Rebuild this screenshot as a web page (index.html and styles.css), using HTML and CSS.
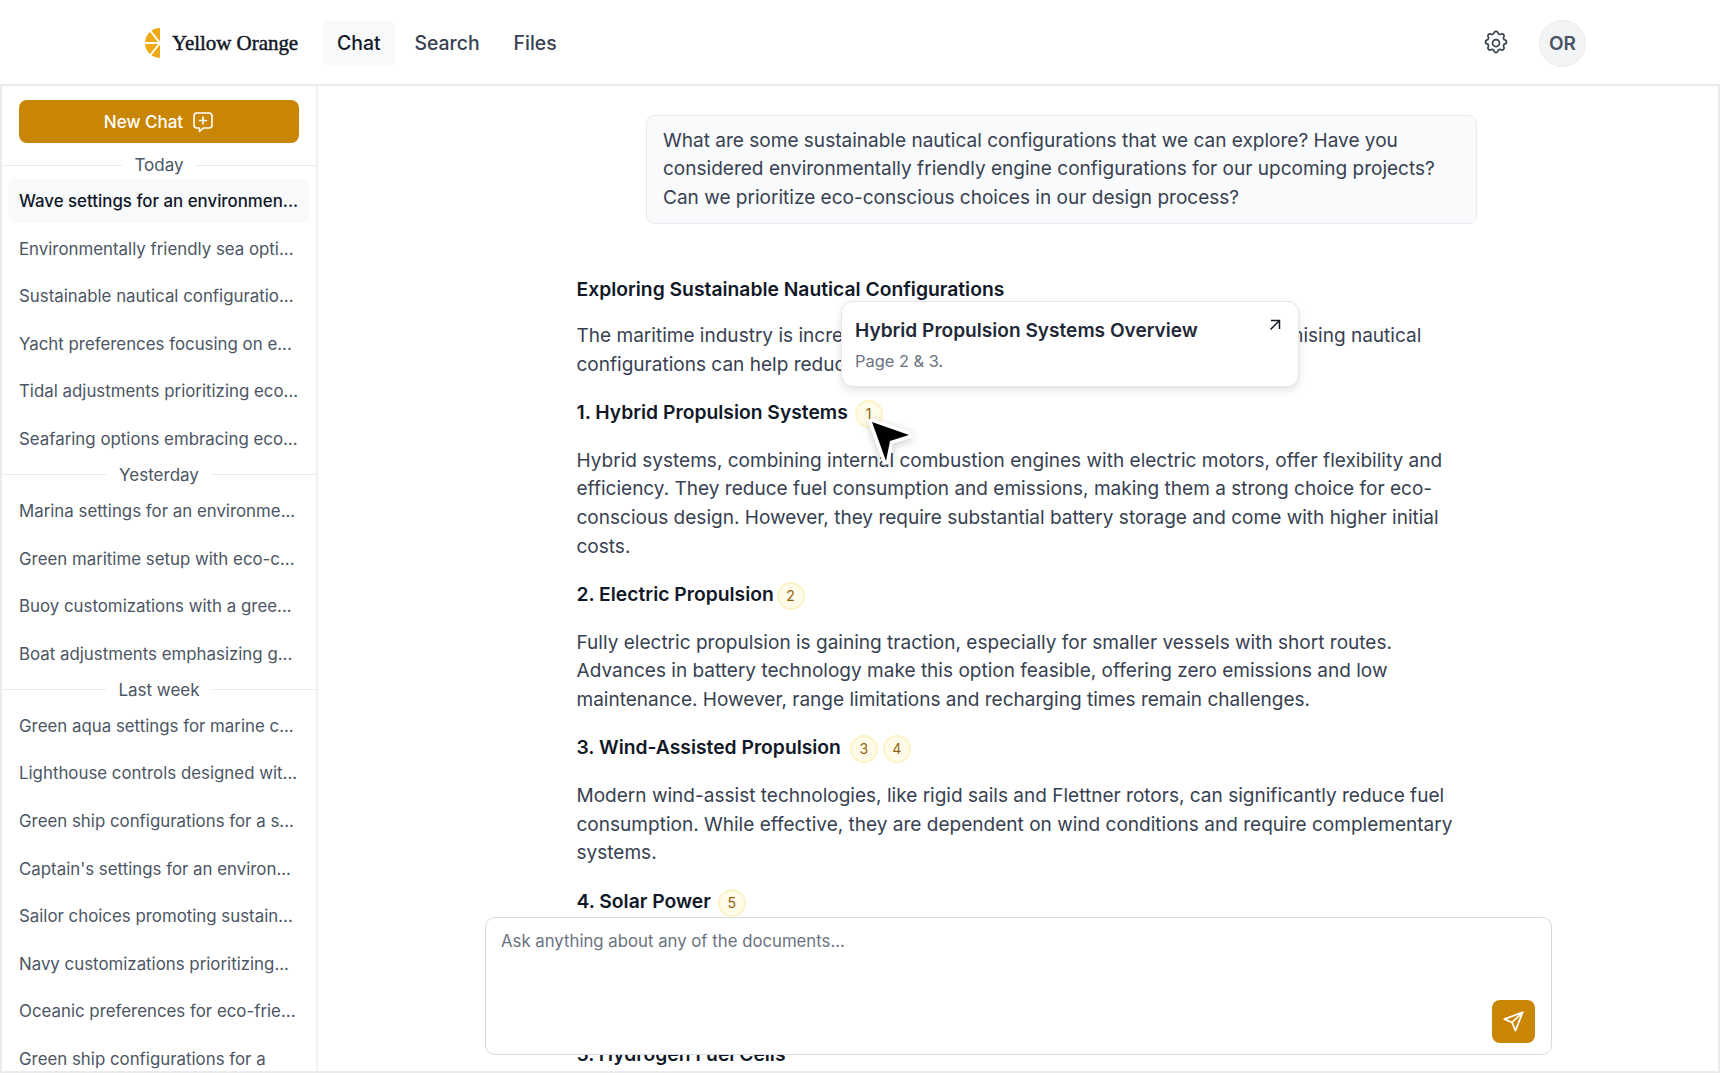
FILE: index.html
```html
<!DOCTYPE html>
<html lang="en">
<head>
    <meta charset="UTF-8">
    <title>Yellow Orange Chat</title>
    <link rel="stylesheet" href="styles.css">
</head>
<body>
    <header class="topbar">
        <div class="brand">
            <svg class="brand-icon" width="16" height="30" viewBox="0 0 16 30">
                <path d="M15 0A15 15 0 0 0 15 30Z" fill="#eeaa14"/>
                <path d="M15 15L5 2.5M15 15L0 15M15 15L5 27.5" stroke="#fff" stroke-width="2" fill="none"/>
            </svg>
            <span class="brand-name">Yellow Orange</span>
        </div>
        <nav class="nav">
            <a class="nav-link active">Chat</a>
            <a class="nav-link">Search</a>
            <a class="nav-link">Files</a>
        </nav>
        <div class="topbar-right">
            <svg class="gear" width="28" height="28" viewBox="0 0 24 24" fill="none" stroke="#374151" stroke-width="1.5" stroke-linecap="round" stroke-linejoin="round">
                <path d="M10.3 3.3c.4-1.8 3-1.8 3.4 0a1.7 1.7 0 0 0 2.6 1.1c1.5-.9 3.3.8 2.4 2.4a1.7 1.7 0 0 0 1 2.6c1.8.4 1.8 3 0 3.4a1.7 1.7 0 0 0-1 2.6c.9 1.5-.9 3.3-2.4 2.4a1.7 1.7 0 0 0-2.6 1c-.4 1.8-3 1.8-3.4 0a1.7 1.7 0 0 0-2.6-1c-1.5.9-3.3-.9-2.4-2.4a1.7 1.7 0 0 0-1-2.6c-1.8-.4-1.8-3 0-3.4a1.7 1.7 0 0 0 1-2.6c-.9-1.6.9-3.3 2.4-2.4 1 .6 2.3.1 2.6-1.1z"/>
                <circle cx="12" cy="12" r="3"/>
            </svg>
            <div class="avatar">OR</div>
        </div>
    </header>

    <div class="layout">
        <aside class="sidebar">
            <button class="new-chat">
                New Chat
                <svg width="22" height="22" viewBox="0 0 22 22" fill="none" stroke="#fff" stroke-width="1.6" stroke-linecap="round" stroke-linejoin="round">
                    <path d="M5 2h12a3 3 0 0 1 3 3v9a3 3 0 0 1-3 3h-5.5l-4 3.5V17H5a3 3 0 0 1-3-3V5a3 3 0 0 1 3-3z"/>
                    <path d="M11 6v7M7.5 9.5h7"/>
                </svg>
            </button>

            <div class="group-label"><span>Today</span></div>
            <a class="chat-item current">Wave settings for an environmen...</a>
            <a class="chat-item">Environmentally friendly sea opti...</a>
            <a class="chat-item">Sustainable nautical configuratio...</a>
            <a class="chat-item">Yacht preferences focusing on e...</a>
            <a class="chat-item">Tidal adjustments prioritizing eco...</a>
            <a class="chat-item">Seafaring options embracing eco...</a>

            <div class="group-label"><span>Yesterday</span></div>
            <a class="chat-item">Marina settings for an environme...</a>
            <a class="chat-item">Green maritime setup with eco-c...</a>
            <a class="chat-item">Buoy customizations with a gree...</a>
            <a class="chat-item">Boat adjustments emphasizing g...</a>

            <div class="group-label"><span>Last week</span></div>
            <a class="chat-item">Green aqua settings for marine c...</a>
            <a class="chat-item">Lighthouse controls designed wit...</a>
            <a class="chat-item">Green ship configurations for a s...</a>
            <a class="chat-item">Captain's settings for an environ...</a>
            <a class="chat-item">Sailor choices promoting sustain...</a>
            <a class="chat-item">Navy customizations prioritizing...</a>
            <a class="chat-item">Oceanic preferences for eco-frie...</a>
            <a class="chat-item">Green ship configurations for a</a>
        </aside>

        <main class="chat">
            <div class="question">What are some sustainable nautical configurations that we can explore? Have you considered environmentally friendly engine configurations for our upcoming projects? Can we prioritize eco-conscious choices in our design process?</div>

            <article class="answer">
                <h3>Exploring Sustainable Nautical Configurations</h3>
                <p>The maritime industry is increasingly focused on reducing impacts. Several promising nautical configurations can help reduce emissions while maintaining performance.</p>

                <h3>1. Hybrid Propulsion Systems <span class="cite">1</span></h3>
                <p>Hybrid systems, combining internal combustion engines with electric motors, offer flexibility and efficiency. They reduce fuel consumption and emissions, making them a strong choice for eco-conscious design. However, they require substantial battery storage and come with higher initial costs.</p>

                <h3>2. Electric Propulsion <span class="cite cite-tight">2</span></h3>
                <p>Fully electric propulsion is gaining traction, especially for smaller vessels with short routes. Advances in battery technology make this option feasible, offering zero emissions and low maintenance. However, range limitations and recharging times remain challenges.</p>

                <h3>3. Wind-Assisted Propulsion <span class="cite cite-wide">3</span><span class="cite">4</span></h3>
                <p>Modern wind-assist technologies, like rigid sails and Flettner rotors, can significantly reduce fuel consumption. While effective, they are dependent on wind conditions and require complementary systems.</p>

                <h3>4. Solar Power <span class="cite">5</span></h3>
                <p>Solar panels can supplement onboard power needs, cutting generator use while at anchor and lowering overall running costs across a full season. They work best on vessels with large open deck areas and pair well with battery storage on board.</p>

                <h3>5. Hydrogen Fuel Cells</h3>
            </article>

            <div class="source-popup">
                <div class="source-title">Hybrid Propulsion Systems Overview</div>
                <div class="source-pages">Page 2 &amp; 3.</div>
                <svg class="source-open" width="14" height="14" viewBox="0 0 14 14" fill="none" stroke="#111827" stroke-width="1.5">
                    <path d="M3 2.5h8.5V11M11.5 2.5L2.5 11.5"/>
                </svg>
            </div>

            <svg class="pointer" width="50" height="52" viewBox="0 0 50 52">
                <path d="M4 3L41 16L22 22L18 42Z" fill="#000" stroke="#fff" stroke-width="7" stroke-linejoin="round" paint-order="stroke"/>
            </svg>

            <div class="composer">
                <div class="placeholder">Ask anything about any of the documents...</div>
                <button class="send">
                    <svg width="23" height="23" viewBox="0 0 24 24" fill="none" stroke="#fff" stroke-width="1.8" stroke-linecap="round" stroke-linejoin="round">
                        <path d="M21.5 2.5L2.5 9.5l8 3.5 3.5 8.5z"/>
                        <path d="M21.5 2.5L10.5 13"/>
                    </svg>
                </button>
            </div>
        </main>
    </div>
</body>
</html>
```
FILE: styles.css
```css
* {
    box-sizing: border-box;
}
html, body {
    height: 100%;
}
body {
    margin: 0;
    font-family: 'Inter', 'Liberation Sans', sans-serif;
    color: #1f2937;
    background: #fff;
    overflow: hidden;
}
.topbar {
    display: flex;
    align-items: center;
    height: 86px;
    padding: 2px 134px 0 145px;
    border-bottom: 2px solid #e9ebef;
}
.brand {
    display: flex;
    align-items: center;
    gap: 11px;
    width: 178px;
}
.brand-name {
    font-family: 'Liberation Serif', serif;
    font-size: 21px;
    letter-spacing: -0.05px;
    color: #111827;
    white-space: nowrap;
    -webkit-text-stroke: 0.45px #111827;
}
.nav {
    display: flex;
    gap: 6px;
    font-size: 19.4px;
    font-weight: 500;
}
.nav-link {
    padding: 0 14px;
    height: 45px;
    line-height: 45px;
    border-radius: 6px;
    color: #374151;
}
.nav-link.active {
    background: #f8f9fb;
    color: #111827;
}
.topbar-right {
    display: flex;
    align-items: center;
    gap: 29px;
    margin-left: auto;
}
.avatar {
    width: 47px;
    height: 47px;
    border-radius: 50%;
    border: 1px solid #e9ebef;
    background: #f3f4f6;
    color: #4b5563;
    font-size: 19px;
    font-weight: 600;
    line-height: 45px;
    text-align: center;
}
.layout {
    display: flex;
    height: 987px;
    border-bottom: 2px solid #e9ebef;
}
.sidebar {
    width: 318px;
    flex-shrink: 0;
    padding-top: 14px;
    border-left: 2px solid #e9ebef;
    border-right: 2px solid #f0f1f4;
    overflow: hidden;
}
.new-chat {
    display: flex;
    align-items: center;
    justify-content: center;
    gap: 9px;
    width: 280px;
    height: 43px;
    margin: 0 0 8px 17px;
    border: none;
    border-radius: 8px;
    background: #c98504;
    color: #fff;
    font-family: inherit;
    font-size: 17px;
    font-weight: 500;
}
.group-label {
    height: 28px;
    line-height: 28px;
    font-size: 17px;
    color: #4b5563;
    text-align: center;
    background: linear-gradient(#e9ebef, #e9ebef) center / 100% 1px no-repeat;
}
.group-label span {
    padding: 0 12px;
    background: #fff;
}
.chat-item {
    display: block;
    height: 44px;
    margin: 0 7px 0 6px;
    padding: 0 11px;
    border-radius: 8px;
    font-size: 16.85px;
    line-height: 44px;
    color: #4b5563;
    white-space: nowrap;
    overflow: hidden;
}
.chat-item + .chat-item {
    margin-top: 3.6px;
}
.chat-item.current {
    background: #f8f9fb;
    color: #111827;
    font-weight: 500;
}
.chat {
    position: relative;
    flex: 1;
    overflow: hidden;
    border-right: 2px solid #e9ebef;
}
.question {
    width: 831px;
    margin: 29px 0 0 328px;
    padding: 10.5px 16px;
    border: 1px solid #e9ebef;
    border-radius: 8px;
    background: #f9fafb;
    font-size: 19.05px;
    line-height: 28.6px;
    color: #374151;
}
.answer {
    width: 888px;
    margin: 51px 0 0 258.5px;
    font-size: 19.05px;
    line-height: 28.6px;
    color: #374151;
}
.answer h3 {
    margin: 0;
    font-size: 19.3px;
    font-weight: 600;
    color: #111827;
}
.answer p {
    margin: 18.75px 0;
}
.cite {
    display: inline-block;
    width: 28px;
    height: 28px;
    margin-left: 2px;
    border: 2px solid #fdf3c9;
    border-radius: 50%;
    background: #fefce8;
    color: #92610f;
    font-size: 14px;
    font-weight: 400;
    line-height: 24px;
    text-align: center;
}
.cite-tight {
    margin-left: -2px;
}
.cite-wide {
    margin-left: 4px;
}
.cite + .cite {
    margin-left: 5px;
}
.source-popup {
    position: absolute;
    left: 523px;
    top: 215px;
    width: 458px;
    height: 86px;
    padding: 13px 13px;
    border: 1px solid #e5e7eb;
    border-radius: 12px;
    background: #fff;
    box-shadow: 0 3px 8px rgba(0, 0, 0, 0.12);
}
.source-title {
    font-size: 19.1px;
    font-weight: 600;
    line-height: 30px;
    color: #1f2937;
}
.source-pages {
    margin-top: 2px;
    font-size: 16.4px;
    line-height: 28px;
    color: #6b7280;
}
.source-open {
    position: absolute;
    top: 16px;
    right: 16px;
}
.pointer {
    position: absolute;
    left: 550px;
    top: 333px;
    filter: drop-shadow(0 2px 4px rgba(0, 0, 0, 0.2));
}
.composer {
    position: absolute;
    left: 167px;
    top: 831px;
    width: 1067px;
    height: 138px;
    padding: 10px 15px;
    border: 1px solid #d8dbe1;
    border-radius: 10px;
    background: #fff;
}
.placeholder {
    font-size: 16.75px;
    line-height: 26px;
    color: #6b7280;
}
.send {
    position: absolute;
    right: 16px;
    bottom: 11px;
    display: flex;
    align-items: center;
    justify-content: center;
    width: 43px;
    height: 43px;
    padding: 0;
    border: none;
    border-radius: 8px;
    background: #c98504;
}
```
